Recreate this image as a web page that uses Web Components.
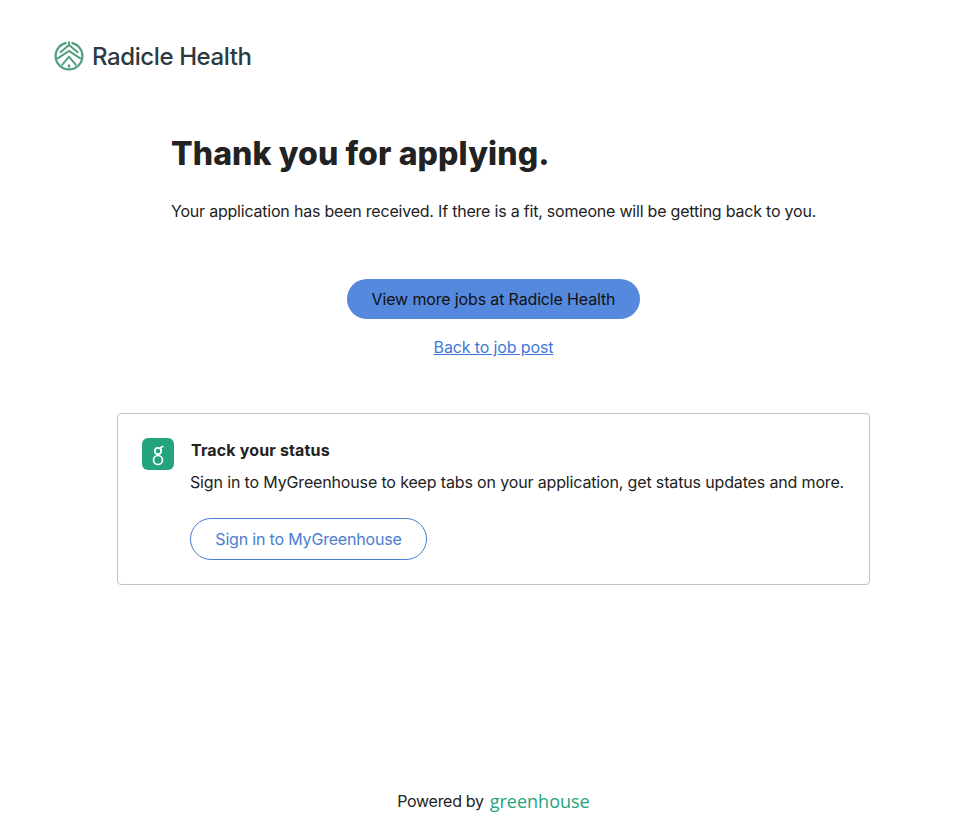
<!DOCTYPE html>
<html lang="en">
<head>
<meta charset="utf-8">
<title>Thank you for applying</title>
<style>
    html, body {
        margin: 0;
        background: #fff;
    }
    body {
        font-family: Inter, "Liberation Sans", sans-serif;
        color: #222;
    }
</style>
</head>
<body>
<confirmation-page>
    <company-logo slot="logo" name="Radicle Health"></company-logo>
    <thanks-message slot="message" title="Thank you for applying.">Your application has been received. If there is a fit, someone will be getting back to you.</thanks-message>
    <job-actions slot="actions" primary="View more jobs at Radicle Health" secondary="Back to job post"></job-actions>
    <status-card slot="card" title="Track your status" action="Sign in to MyGreenhouse">Sign in to MyGreenhouse to keep tabs on your application, get status updates and more.</status-card>
    <powered-by slot="footer"></powered-by>
</confirmation-page>

<script>
class ConfirmationPage extends HTMLElement {
    constructor() {
        super();
        this.attachShadow({ mode: 'open' });
        this.shadowRoot.innerHTML = `
            <style>
                :host {
                    display: block;
                    height: 837px;
                    overflow: hidden;
                }
                .page {
                    display: flex;
                    flex-direction: column;
                    height: 837px;
                    box-sizing: border-box;
                    padding: 41px 102px 0 54px;
                }
                main {
                    display: flex;
                    flex-direction: column;
                    width: 753px;
                    margin: 0 0 0 63px;
                    flex: 1;
                }
            </style>
            <div class="page">
                <slot name="logo"></slot>
                <main>
                    <slot name="message"></slot>
                    <slot name="actions"></slot>
                    <slot name="card"></slot>
                    <slot name="footer"></slot>
                </main>
            </div>
        `;
    }
}

class CompanyLogo extends HTMLElement {
    constructor() {
        super();
        this.attachShadow({ mode: 'open' });
        const name = this.getAttribute('name') || '';
        this.shadowRoot.innerHTML = `
            <style>
                :host {
                    display: flex;
                    align-items: center;
                    gap: 8px;
                    height: 30px;
                }
                svg {
                    width: 30px;
                    height: 30px;
                    flex: none;
                }
                span {
                    font-size: 24px;
                    font-weight: 500;
                    letter-spacing: -0.4px;
                    color: #2b3a42;
                }
            </style>
            <svg viewBox="0 0 30 30" fill="none" stroke="#4f9e7d" stroke-width="2">
                <path d="M12.500 1.800C6.300 2.900 1.600 8.400 1.600 15a13.400 13.400 0 0 0 26.800 0C28.400 8.400 23.700 2.900 17.500 1.800" stroke-width="2.200"/>
                <path d="M15 .5V4"/>
                <path d="M6 11.700 15 4l9.300 7.700"/>
                <path d="M3.300 17.700 15 10l11.700 7.700"/>
                <path d="M7.700 24.300 15 15.700l7.300 8.600"/>
                <path d="M15 23.500v3" stroke-width="2.400"/>
            </svg>
            <span>${name}</span>
        `;
    }
}

class ThanksMessage extends HTMLElement {
    constructor() {
        super();
        this.attachShadow({ mode: 'open' });
        const title = this.getAttribute('title') || '';
        this.shadowRoot.innerHTML = `
            <style>
                :host {
                    display: block;
                    padding: 0 0 0 54px;
                }
                h1 {
                    margin: 61px 0 0;
                    font-size: 32px;
                    line-height: 44px;
                    font-weight: 800;
                    letter-spacing: 0.1px;
                    color: #222;
                }
                p {
                    margin: 23px 0 0;
                    font-size: 16px;
                    line-height: 24px;
                    letter-spacing: -0.21px;
                    white-space: nowrap;
                    color: #222;
                }
            </style>
            <h1>${title}</h1>
            <p><slot></slot></p>
        `;
    }
}

class JobActions extends HTMLElement {
    constructor() {
        super();
        this.attachShadow({ mode: 'open' });
        this.shadowRoot.innerHTML = `
            <style>
                :host {
                    display: flex;
                    flex-direction: column;
                    align-items: center;
                    margin-top: 56px;
                }
                a {
                    font-size: 16px;
                    line-height: 24px;
                }
                .primary {
                    display: flex;
                    align-items: center;
                    justify-content: center;
                    width: 293px;
                    height: 40px;
                    border-radius: 20px;
                    background: #5489dd;
                    color: #111;
                    letter-spacing: -0.15px;
                    text-decoration: none;
                    white-space: nowrap;
                }
                .secondary {
                    margin-top: 16px;
                    color: #3f78d8;
                    letter-spacing: -0.13px;
                    text-decoration: underline;
                }
            </style>
            <a class="primary" href="#">${this.getAttribute('primary')}</a>
            <a class="secondary" href="#">${this.getAttribute('secondary')}</a>
        `;
    }
}

class StatusCard extends HTMLElement {
    constructor() {
        super();
        this.attachShadow({ mode: 'open' });
        this.shadowRoot.innerHTML = `
            <style>
                :host {
                    display: block;
                    margin-top: 54px;
                }
                .card {
                    display: grid;
                    grid-template-columns: 32px 1fr;
                    column-gap: 16px;
                    box-sizing: border-box;
                    height: 172px;
                    padding: 24px;
                    border: 1px solid #c2c2c2;
                    border-radius: 4px;
                }
                .badge {
                    width: 32px;
                    height: 32px;
                    border-radius: 6px;
                    background: #23a47f;
                }
                .badge svg {
                    display: block;
                }
                .body {
                    min-width: 0;
                }
                h2 {
                    margin: 0 0 0 1px;
                    font-size: 16px;
                    line-height: 24px;
                    font-weight: 700;
                    letter-spacing: 0.15px;
                    color: #222;
                }
                p {
                    margin: 8px 0 0;
                    font-size: 16px;
                    line-height: 24px;
                    letter-spacing: -0.15px;
                    white-space: nowrap;
                    color: #222;
                }
                a {
                    display: flex;
                    align-items: center;
                    justify-content: center;
                    box-sizing: border-box;
                    width: 237px;
                    height: 42px;
                    margin-top: 24px;
                    border: 1px solid #4a7dd0;
                    border-radius: 21px;
                    font-size: 16px;
                    letter-spacing: -0.18px;
                    color: #4a7dd0;
                    text-decoration: none;
                    white-space: nowrap;
                }
            </style>
            <div class="card">
                <div class="badge">
                    <svg width="32" height="32" viewBox="0 0 32 32" fill="none" stroke="#fff" stroke-width="1.700" stroke-linecap="round">
                        <circle cx="16" cy="22" r="4.500"/>
                        <circle cx="16" cy="13" r="3.200"/>
                        <path d="M16 16.200v1.300"/>
                        <path d="M18.300 10.700c.3-1.400 1.100-2.100 2.500-2.200"/>
                    </svg>
                </div>
                <div class="body">
                    <h2>${this.getAttribute('title')}</h2>
                    <p><slot></slot></p>
                    <a href="#">${this.getAttribute('action')}</a>
                </div>
            </div>
        `;
    }
}

class PoweredBy extends HTMLElement {
    constructor() {
        super();
        this.attachShadow({ mode: 'open' });
        this.shadowRoot.innerHTML = `
            <style>
                :host {
                    display: flex;
                    align-items: center;
                    justify-content: center;
                    gap: 6px;
                    margin-top: auto;
                    height: 24px;
                    margin-bottom: 24px;
                    font-size: 16px;
                    letter-spacing: -0.3px;
                    color: #222;
                }
                .brand {
                    font-family: "Open Sans", sans-serif;
                    font-size: 18px;
                    color: #23a47f;
                    letter-spacing: 0;
                }
            </style>
            <span>Powered by</span>
            <span class="brand">greenhouse</span>
        `;
    }
}

customElements.define('confirmation-page', ConfirmationPage);
customElements.define('company-logo', CompanyLogo);
customElements.define('thanks-message', ThanksMessage);
customElements.define('job-actions', JobActions);
customElements.define('status-card', StatusCard);
customElements.define('powered-by', PoweredBy);
</script>
</body>
</html>
